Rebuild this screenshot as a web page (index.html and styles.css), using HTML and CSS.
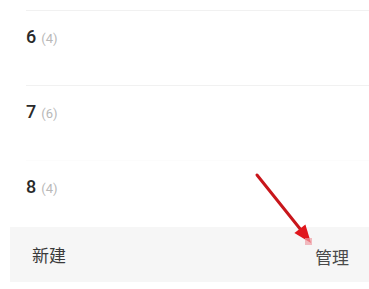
FILE: index.html
```html
<!DOCTYPE html>
<html lang="zh">
<head>
<meta charset="utf-8">
<link rel="stylesheet" href="styles.css">
</head>
<body>
<div class="page">
  <div class="list">
    <div class="row"><span class="name">6</span><span class="count">(4)</span></div>
    <div class="row"><span class="name">7</span><span class="count">(6)</span></div>
    <div class="row faint"><span class="name">8</span><span class="count">(4)</span></div>
  </div>
  <div class="bar">
    <span class="btn">新建</span>
    <span class="btn manage">管理</span>
  </div>
  <svg class="arrow" width="369" height="289" viewBox="0 0 369 289">
    <line x1="257" y1="175" x2="301" y2="230" stroke="#c8161b" stroke-width="3" stroke-linecap="round"/>
    <polygon points="294.4,233.1 305.4,224.5 311,243" fill="#e0161c"/>
    <rect x="305" y="238" width="7" height="7" fill="#f0a0a6" opacity="0.7"/>
  </svg>
</div>
</body>
</html>
```
FILE: styles.css
```css
html, body {
  margin: 0;
  padding: 0;
  background: #ffffff;
}
.page {
  position: relative;
  width: 369px;
  height: 289px;
  overflow: hidden;
  font-family: Roboto, "Noto Sans", "Noto Sans CJK SC", sans-serif;
}
.list {
  padding-top: 10px;
  padding-left: 26px;
}
.row {
  height: 75px;
  box-sizing: border-box;
  border-top: 1px solid #f1f1f1;
  padding-top: 14px;
  display: flex;
  align-items: baseline;
  gap: 5px;
}
.row.faint {
  border-top-color: #fcfcfc;
}
.name {
  font-size: 18px;
  font-weight: 500;
  line-height: 24px;
  color: #2a2a2a;
}
.count {
  font-size: 13px;
  color: #b8b8b8;
}
.bar {
  margin-top: -8px;
  margin-left: 10px;
  height: 55px;
  background: #f6f6f6;
  display: flex;
  justify-content: space-between;
  align-items: center;
  padding: 0 20px 0 22px;
  font-family: "Noto Sans CJK SC", sans-serif;
}
.btn {
  font-size: 17px;
  color: #3a3a3a;
  line-height: 24px;
}
.manage {
  color: #4a4a4a;
  margin-top: 4px;
}
.arrow {
  position: absolute;
  left: 0;
  top: 0;
  pointer-events: none;
}
```
